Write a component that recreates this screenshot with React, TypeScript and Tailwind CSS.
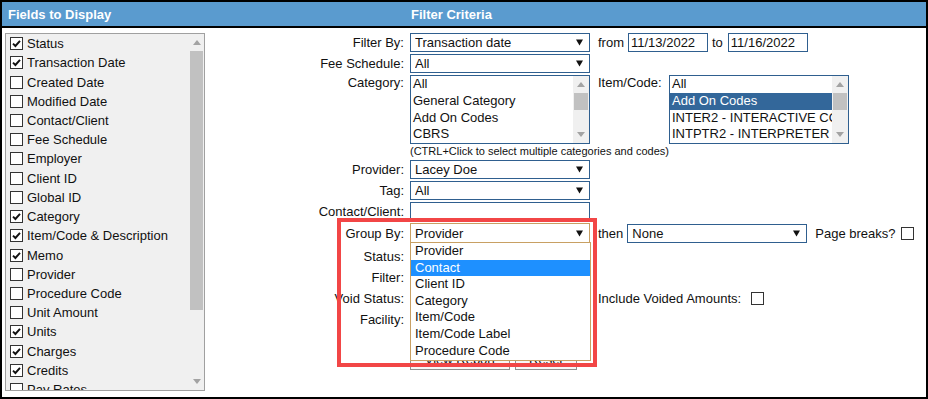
import type { ReactNode } from "react";
import clsx from "clsx";

const fields: [string, boolean][] = [
  ["Status", true],
  ["Transaction Date", true],
  ["Created Date", false],
  ["Modified Date", false],
  ["Contact/Client", false],
  ["Fee Schedule", false],
  ["Employer", false],
  ["Client ID", false],
  ["Global ID", false],
  ["Category", true],
  ["Item/Code & Description", true],
  ["Memo", true],
  ["Provider", false],
  ["Procedure Code", false],
  ["Unit Amount", false],
  ["Units", true],
  ["Charges", true],
  ["Credits", true],
  ["Pay Rates", false],
];

const groupOptions = [
  "Provider",
  "Contact",
  "Client ID",
  "Category",
  "Item/Code",
  "Item/Code Label",
  "Procedure Code",
];

function Checkbox({ checked }: { checked?: boolean }) {
  return (
    <span className="flex h-[13px] w-[13px] shrink-0 items-center justify-center border border-[#333] bg-white">
      {checked && (
        <svg width="11" height="11" viewBox="0 0 11 11">
          <path d="M2 5.6 L4.4 8 L9 2.8" fill="none" stroke="#111" strokeWidth="1.9" />
        </svg>
      )}
    </span>
  );
}

function Arrow({ up }: { up?: boolean }) {
  return (
    <svg width="8" height="5" viewBox="0 0 8 5">
      <polygon points={up ? "0,5 8,5 4,0" : "0,0 8,0 4,5"} fill="#a3a3a3" />
    </svg>
  );
}

function Scrollbar({ thumb, width = 15 }: { thumb: number; width?: number }) {
  return (
    <div className="flex shrink-0 flex-col bg-[#f0f0f0]" style={{ width }}>
      <div className="flex h-[17px] items-center justify-center">
        <Arrow up />
      </div>
      <div className="flex-1">
        <div className="mx-[1px] bg-[#c1c1c1]" style={{ height: thumb }} />
      </div>
      <div className="flex h-[17px] items-center justify-center">
        <Arrow />
      </div>
    </div>
  );
}

function Select({
  value,
  focused,
  className,
  children,
}: {
  value: string;
  focused?: boolean;
  className?: string;
  children?: ReactNode;
}) {
  return (
    <div
      className={clsx(
        "relative flex h-[19px] w-[180px] items-center border bg-white pl-[4px] pr-[6px]",
        focused ? "border-[#c8a063]" : "border-[#2f5f8f]",
        className,
      )}
    >
      <span className="flex-1 truncate">{value}</span>
      <svg width="7" height="7" viewBox="0 0 7 7">
        <polygon points="0,0.5 7,0.5 3.5,6.5" fill="#111" />
      </svg>
      {children}
    </div>
  );
}

function Input({ value, className }: { value?: string; className?: string }) {
  return (
    <div
      className={clsx(
        "flex h-[19px] items-center border border-[#2f5f8f] bg-white pl-[2px]",
        className,
      )}
    >
      {value}
    </div>
  );
}

function ListBox({ items, selected }: { items: string[]; selected?: number }) {
  return (
    <div className="flex h-[69px] w-[180px] border border-[#2f5f8f] bg-white">
      <div className="min-w-0 flex-1 overflow-hidden">
        {items.map((item, i) => (
          <div
            key={item}
            className={clsx(
              "h-[16.75px] whitespace-nowrap pl-[2px] leading-[16.75px]",
              i === selected && "bg-[#33679a] text-white",
            )}
          >
            {item}
          </div>
        ))}
      </div>
      <Scrollbar thumb={17} width={16} />
    </div>
  );
}

function Row({
  label,
  children,
  className,
  top,
}: {
  label: string;
  children?: ReactNode;
  className?: string;
  top?: boolean;
}) {
  return (
    <div className={clsx("flex", top ? "items-start" : "items-center", className)}>
      <div className={clsx("w-[199px] whitespace-nowrap text-right", top && "leading-[16px]")}>
        {label}
      </div>
      <div className="ml-[6px] flex items-center">{children}</div>
    </div>
  );
}

export default function App() {
  return (
    <div className="relative box-border h-[399px] w-[928px] overflow-hidden border-2 border-black bg-white font-['Liberation_Sans',Arial,sans-serif] text-[13px] leading-[15px] text-[#111]">
      <div className="flex h-[26px] items-center border-b-2 border-black bg-[#5a9bcf] text-[13px] font-bold text-white">
        <div className="w-[203px] pl-[6px]">Fields to Display</div>
        <div className="pl-[206px]">Filter Criteria</div>
      </div>

      <div className="flex">
        {/* fields list */}
        <div className="w-[203px] pl-[3px] pt-[5px]">
          <div className="flex h-[358px] w-[200px] border border-[#a0a0a0] bg-[#f0f0f0]">
            <div className="flex-1 overflow-hidden">
              {fields.map(([name, checked]) => (
                <div key={name} className="flex h-[19.22px] items-center gap-[4px] pl-[4px]">
                  <Checkbox checked={checked} />
                  <span className="whitespace-nowrap">{name}</span>
                </div>
              ))}
            </div>
            <Scrollbar thumb={259} />
          </div>
        </div>

        {/* filter form */}
        <div className="flex-1 pt-[5px]">
          <Row label="Filter By:">
            <Select value="Transaction date" />
            <span className="ml-[8px]">from</span>
            <Input value="11/13/2022" className="ml-[4px] w-[80px]" />
            <span className="ml-[4px]">to</span>
            <Input value="11/16/2022" className="ml-[5px] w-[80px]" />
          </Row>
          <Row label="Fee Schedule:" className="mt-[2px]">
            <Select value="All" />
          </Row>
          <Row label="Category:" top className="mt-[2px]">
            <ListBox items={["All", "General Category", "Add On Codes", "CBRS"]} />
            <div className="ml-[8px] flex items-start self-start">
              <span className="w-[71px] leading-[16px]">Item/Code:</span>
              <ListBox
                items={[
                  "All",
                  "Add On Codes",
                  "INTER2 - INTERACTIVE COMPLEXITY",
                  "INTPTR2 - INTERPRETER SERVICES",
                ]}
                selected={1}
              />
            </div>
          </Row>
          <div className="h-[14px] pl-[205px] text-[11px] leading-[14px]">
            (CTRL+Click to select multiple categories and codes)
          </div>
          <Row label="Provider:" className="mt-[2px]">
            <Select value="Lacey Doe" />
          </Row>
          <Row label="Tag:" className="mt-[2px]">
            <Select value="All" />
          </Row>
          <Row label="Contact/Client:" className="mt-[2px]">
            <Input className="h-[18px] w-[180px]" />
          </Row>
          <Row label="Group By:" className="mt-[2px]">
            <Select value="Provider" focused className="h-[20px]">
              <div className="absolute left-[-1px] top-full z-10 w-[181px] border border-[#c8a063] bg-white pb-[1px]">
                {groupOptions.map((opt, i) => (
                  <div
                    key={opt}
                    className={clsx(
                      "h-[16.6px] pl-[4px] leading-[16.6px]",
                      i === 1 && "bg-[#1e90ff] text-white",
                    )}
                  >
                    {opt}
                  </div>
                ))}
              </div>
            </Select>
            <span className="ml-[8px]">then</span>
            <Select value="None" className="ml-[4px]" />
            <span className="ml-[8px]">Page breaks?</span>
            <span className="ml-[5px]">
              <Checkbox />
            </span>
          </Row>
          <Row label="Status:" className="mt-[3px] h-[21px]">
            <div className="w-[180px]" />
          </Row>
          <Row label="Filter:" className="h-[21px]">
            <div className="w-[180px]" />
          </Row>
          <Row label="Void Status:" className="h-[21px]">
            <div className="w-[180px]" />
            <span className="ml-[8px]">Include Voided Amounts:</span>
            <span className="ml-[10px]">
              <Checkbox />
            </span>
          </Row>
          <Row label="Facility:" className="h-[21px]">
            <div className="w-[180px]" />
          </Row>
          <div className="mt-[19px] flex gap-[5px] pl-[205px]">
            <button className="h-[21px] w-[100px] border border-[#8f8f8f] bg-[#f7f7f7] text-[13px]">
              View Report
            </button>
            <button className="h-[21px] w-[62px] border border-[#8f8f8f] bg-[#f7f7f7] text-[13px]">
              Reset
            </button>
          </div>
        </div>
      </div>

      {/* annotation highlight */}
      <div className="pointer-events-none absolute left-[335px] top-[216px] z-20 h-[149px] w-[260px] border-4 border-[#f24646]" />
    </div>
  );
}
